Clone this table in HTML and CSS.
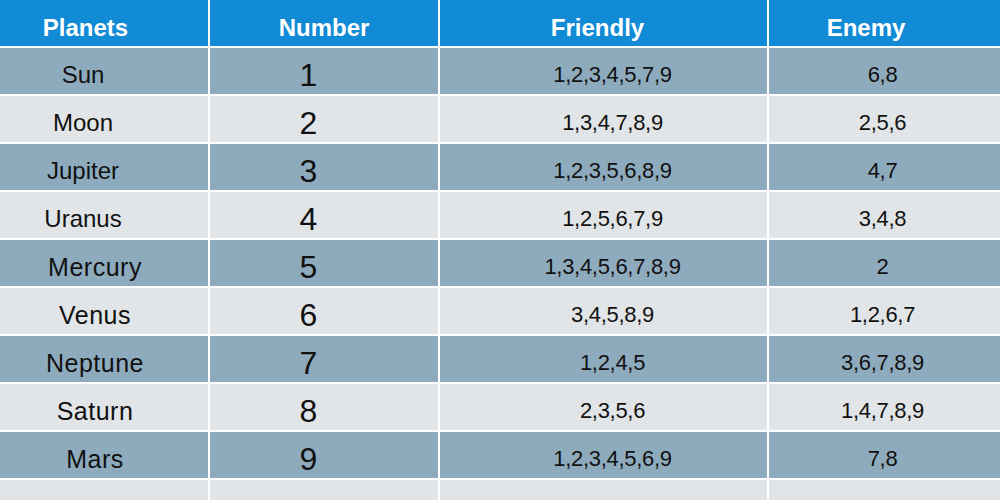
FILE: index.html
```html
<!DOCTYPE html>
<html lang="en">
<head>
<meta charset="utf-8">
<title>Planets</title>
<link rel="stylesheet" href="styles.css">
</head>
<body>
<div class="frame">
  <div class="grid">
    <div class="cell head c1">Planets</div>
    <div class="cell head c2">Number</div>
    <div class="cell head c3">Friendly</div>
    <div class="cell head c4">Enemy</div>

    <div class="cell dark name">Sun</div>
    <div class="cell dark num">1</div>
    <div class="cell dark list">1,2,3,4,5,7,9</div>
    <div class="cell dark list enemy">6,8</div>

    <div class="cell light name">Moon</div>
    <div class="cell light num">2</div>
    <div class="cell light list">1,3,4,7,8,9</div>
    <div class="cell light list enemy">2,5,6</div>

    <div class="cell dark name">Jupiter</div>
    <div class="cell dark num">3</div>
    <div class="cell dark list">1,2,3,5,6,8,9</div>
    <div class="cell dark list enemy">4,7</div>

    <div class="cell light name">Uranus</div>
    <div class="cell light num">4</div>
    <div class="cell light list">1,2,5,6,7,9</div>
    <div class="cell light list enemy">3,4,8</div>

    <div class="cell dark name shift">Mercury</div>
    <div class="cell dark num">5</div>
    <div class="cell dark list">1,3,4,5,6,7,8,9</div>
    <div class="cell dark list enemy">2</div>

    <div class="cell light name shift">Venus</div>
    <div class="cell light num">6</div>
    <div class="cell light list">3,4,5,8,9</div>
    <div class="cell light list enemy">1,2,6,7</div>

    <div class="cell dark name shift">Neptune</div>
    <div class="cell dark num">7</div>
    <div class="cell dark list">1,2,4,5</div>
    <div class="cell dark list enemy">3,6,7,8,9</div>

    <div class="cell light name shift">Saturn</div>
    <div class="cell light num">8</div>
    <div class="cell light list">2,3,5,6</div>
    <div class="cell light list enemy">1,4,7,8,9</div>

    <div class="cell dark name shift">Mars</div>
    <div class="cell dark num">9</div>
    <div class="cell dark list">1,2,3,4,5,6,9</div>
    <div class="cell dark list enemy">7,8</div>

    <div class="cell light"></div>
    <div class="cell light"></div>
    <div class="cell light"></div>
    <div class="cell light"></div>
  </div>
</div>
</body>
</html>
```
FILE: styles.css
```css
html, body {
  margin: 0;
  padding: 0;
  background: #ffffff;
  overflow: hidden;
}

.frame {
  width: 1000px;
  height: 500px;
  overflow: hidden;
}

.grid {
  display: grid;
  grid-template-columns: 208px 228px 327px 231px;
  grid-auto-rows: 46px;
  column-gap: 2px;
  row-gap: 2px;
  background: #ffffff;
  font-family: "Liberation Sans", Arial, sans-serif;
  color: #111111;
}

.cell {
  display: flex;
  align-items: center;
  justify-content: center;
  box-sizing: border-box;
  padding-top: 8px;
  white-space: nowrap;
}

.head {
  background: #118bd5;
  color: #ffffff;
  font-weight: bold;
  font-size: 24px;
  padding-top: 10px;
}

.head.c1 { padding-right: 37px; }
.head.c3 { padding-right: 12px; }
.head.c4 { padding-right: 37px; }

.dark { background: #8eabbd; }
.light { background: #e1e5e8; }

.name {
  font-size: 24px;
  padding-right: 42px;
}

.name.shift {
  font-size: 25px;
  letter-spacing: 0.5px;
  padding-right: 18px;
}

.num {
  font-size: 32px;
  padding-right: 31px;
}

.list {
  font-size: 22px;
  letter-spacing: -0.3px;
  padding-left: 18px;
}

.list.enemy {
  padding-left: 0;
  padding-right: 4px;
}
```
